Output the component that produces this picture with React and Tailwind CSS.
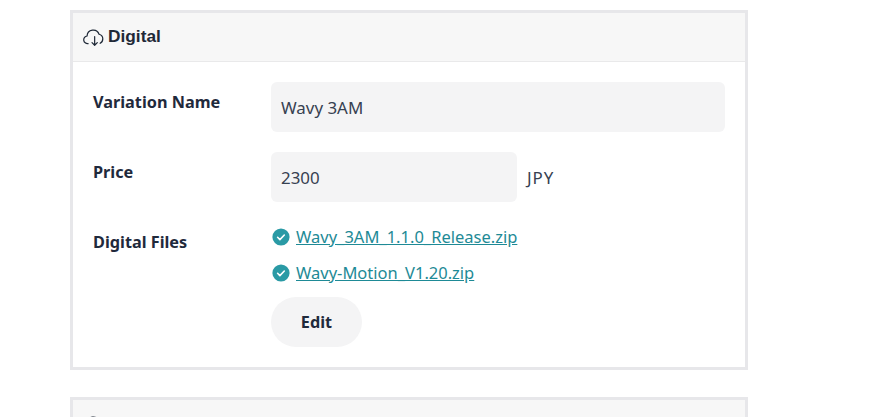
const Cloud = ({ className }) => (
  <svg className={className} viewBox="0 0 20 20" fill="none" stroke="#1f2937" strokeWidth="1.1" strokeLinecap="round" strokeLinejoin="round">
    <path d="M4.6 16a3.4 3.4 0 0 1-.9-6.9 5.6 5.6 0 0 1 10.9-1.6 4.4 4.4 0 0 1 3.4 4.2 4.6 4.6 0 0 1-2.4 4" />
    <path d="M10.6 9.6v7.8M8.2 15.1l2.4 2.4 2.4-2.4" />
  </svg>
);

const Check = () => (
  <svg className="w-[18px] h-[18px] shrink-0" viewBox="0 0 18 18">
    <circle cx="9" cy="9" r="8.6" fill="#2a9aa5" />
    <path d="M5.6 9.3l2.3 2.3 4.4-4.6" fill="none" stroke="#fff" strokeWidth="1.6" strokeLinecap="round" strokeLinejoin="round" />
  </svg>
);

const Card = ({ children }) => (
  <section className="w-[678px] border-[3px] border-[#e7e7ea] bg-white">
    <header className="h-[49px] flex items-center gap-[3px] pl-[10px] bg-[#f7f7f7] border-b border-[#e9e9ea] text-[#1f2937]">
      <Cloud className="w-[22px] h-[22px]" />
      <span className="pb-[1px] font-['Liberation_Sans',sans-serif] font-bold text-[17.3px] leading-none">Digital</span>
    </header>
    {children}
  </section>
);

const FileLink = ({ children }) => (
  <div className="flex items-center gap-[6px] h-[24px]">
    <div className="ml-[1px] flex"><Check /></div>
    <a className="text-[16.5px] text-[#1e8a96] underline leading-[24px]" href="#">{children}</a>
  </div>
);

const Label = ({ children }) => (
  <div className="w-[178px] shrink-0 pt-[8px] font-bold text-[16.25px] leading-[24px] text-[#1f2a3c]">{children}</div>
);

export default function App() {
  return (
    <div className="h-[417px] overflow-hidden bg-white pt-[10px] pl-[70px] font-['Noto_Sans',sans-serif]">
      <Card>
        <div className="pl-[20px] pr-[20px] pt-[20px] pb-[20px] flex flex-col gap-[20px] text-[#374151]">
          <div className="flex">
            <Label>Variation Name</Label>
            <div className="h-[50px] w-[454px] rounded-[6px] bg-[#f4f4f5] px-[10px] pt-[2px] flex items-center text-[16.9px]">Wavy 3AM</div>
          </div>
          <div className="flex">
            <Label>Price</Label>
            <div className="h-[50px] w-[246px] rounded-[6px] bg-[#f4f4f5] px-[10px] pt-[2px] flex items-center text-[16.9px]">2300</div>
            <div className="ml-[10px] h-[50px] pt-[2px] flex items-center text-[16.9px] tracking-[1px]">JPY</div>
          </div>
          <div className="flex">
            <Label>Digital Files</Label>
            <div className="flex flex-col pt-[3px]">
              <div className="flex flex-col gap-[12px]">
                <FileLink>Wavy_3AM_1.1.0_Release.zip</FileLink>
                <FileLink>Wavy-Motion_V1.20.zip</FileLink>
              </div>
              <button className="mt-[12px] w-[91px] h-[50px] rounded-full bg-[#f4f4f5] font-bold text-[16.25px] text-[#1f2a3c]">Edit</button>
            </div>
          </div>
        </div>
      </Card>
      <div className="mt-[27px]">
        <Card />
      </div>
    </div>
  );
}
